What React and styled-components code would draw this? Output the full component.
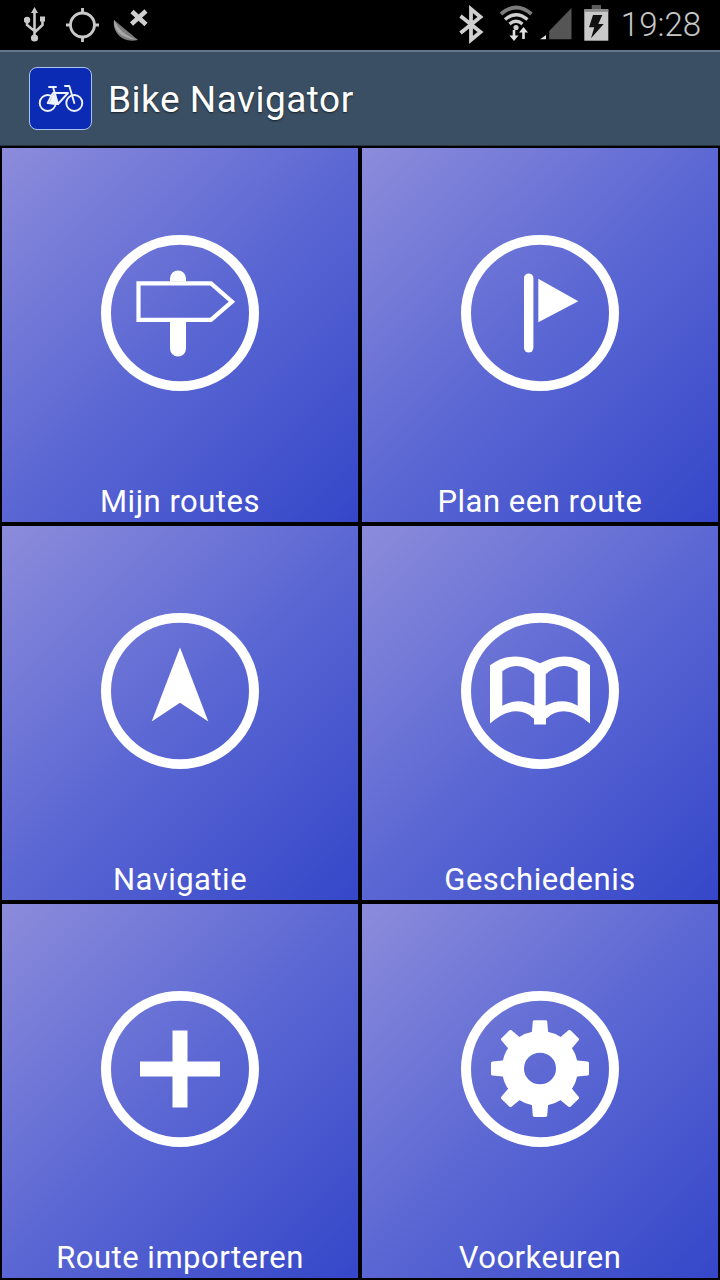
import React from 'react'
import styled, { createGlobalStyle } from 'styled-components'

const GlobalStyle = createGlobalStyle`
    html, body {
        margin: 0;
        padding: 0;
        background: #000;
        font-family: Roboto, "Liberation Sans", sans-serif;
    }
`
const Page = styled.div`
    width: 720px;
    height: 1280px;
    overflow: hidden;
    display: flex;
    flex-direction: column;
    background: #000;
`
const StatusBar = styled.div`
    height: 50px;
    flex: none;
    display: flex;
    align-items: center;
    justify-content: space-between;
    padding: 0 19px 0 24px;
`
const IconGroup = styled.div`
    display: flex;
    align-items: center;
`
const StatusIcon = styled.svg`
    height: 50px;
    flex: none;
    display: block;
`
const Clock = styled.span`
    font-size: 33px;
    font-weight: 300;
    line-height: 50px;
    color: #c8c8c8;
`
const ActionBar = styled.header`
    height: 96px;
    flex: none;
    box-sizing: border-box;
    display: flex;
    align-items: center;
    gap: 16px;
    padding: 0 0 0 29px;
    background: #3a4f64;
    border-top: 2px solid #62788c;
    border-bottom: 1px solid #26333f;
`
const Badge = styled.div`
    width: 63px;
    height: 63px;
    flex: none;
    box-sizing: border-box;
    display: flex;
    align-items: center;
    justify-content: center;
    background: #0c2bb4;
    border: 1.5px solid #a9c3f0;
    border-radius: 8px;
`
const AppTitle = styled.h1`
    margin: 2px 0 0;
    font-size: 37px;
    font-weight: 400;
    letter-spacing: 0.5px;
    line-height: 44px;
    color: #fff;
    text-shadow: 0 1px 2px rgba(0, 0, 0, 0.6);
`
const Grid = styled.main`
    flex: 1;
    display: grid;
    grid-template-columns: repeat(2, 356px);
    grid-template-rows: repeat(3, 374px);
    gap: 4px;
    padding: 2px;
`
const Tile = styled.div`
    display: flex;
    flex-direction: column;
    align-items: center;
    padding-top: 87px;
    background: linear-gradient(135deg, #8c8cdb 0%, #5b67d3 50%, #3547c9 100%);
`
const TileIcon = styled.svg`
    width: 158px;
    height: 156px;
    flex: none;
    display: block;
`
const TileLabel = styled.span`
    margin-top: auto;
    padding-bottom: 1px;
    font-size: 31px;
    letter-spacing: 0.5px;
    line-height: 38px;
    color: #fff;
`

const Ring = ({ children }) => (
    <TileIcon viewBox="0 0 158 158" preserveAspectRatio="none" fill="#fff">
        <circle cx="79" cy="79" r="74" fill="none" stroke="#fff" strokeWidth="10" />
        {children}
    </TileIcon>
)

const gearTeeth = [0, 45, 90, 135, 180, 225, 270, 315]

const icons = {
    sign: (
        <>
            <path d="M69 47V44a8 8 0 0 1 16 0V47ZM69 88H85V115a8 8 0 0 1-16 0Z" />
            <path d="M37.500 49H110L131 67.500L110 86H37.500Z" fill="none" stroke="#fff" strokeWidth="4.200" />
        </>
    ),
    flag: (
        <>
            <rect x="63" y="39" width="9.400" height="80" rx="4.700" />
            <path d="M77.300 44.300L117.300 67L77.300 88.300Z" />
        </>
    ),
    arrow: <path d="M79 35L107.300 110L79 91L50.700 110Z" />,
    book: (
        <path
            fillRule="evenodd"
            d="M29 53Q52 36 79 51Q106 36 129 53V112Q104 90 85 107V113H73V107Q54 90 29 112ZM41.300 59Q57 47 73.300 62V94Q57 85 41.300 94ZM116.700 59Q101 47 84.700 62V94Q101 85 116.700 94Z"
        />
    ),
    plus: <path d="M71.500 40H86.500V71.500H119V86.500H86.500V118H71.500V86.500H39V71.500H71.500Z" />,
    gear: (
        <>
            <circle cx="79" cy="78.500" r="27" fill="none" stroke="#fff" strokeWidth="22" />
            {gearTeeth.map(angle => (
                <path key={angle} d="M70.500 46L71.800 31Q72 29.500 73.500 29.500H84.500Q86 29.500 86.200 31L87.500 46Z" transform={`rotate(${angle} 79 78.500)`} />
            ))}
        </>
    ),
}

const tiles = [
    { label: 'Mijn routes', icon: 'sign' },
    { label: 'Plan een route', icon: 'flag' },
    { label: 'Navigatie', icon: 'arrow' },
    { label: 'Geschiedenis', icon: 'book' },
    { label: 'Route importeren', icon: 'plus' },
    { label: 'Voorkeuren', icon: 'gear' },
]

const BikeLogo = () => (
    <svg width="46" height="30" viewBox="0 0 46 30" fill="none" stroke="#eef2fd" strokeWidth="1.900" strokeLinecap="round" strokeLinejoin="round">
        <circle cx="9.700" cy="19" r="8" />
        <circle cx="36.300" cy="19" r="8" />
        <path d="M11 3H18M15 3L20 20L9.700 19L15 9H30L20 20M27 2H31.300L36.300 19" />
        <path d="M12 19L16 11L20 20Z" fill="#eef2fd" />
    </svg>
)

// status icons are drawn in screen coordinates, each viewBox runs up to the next icon
const UsbIcon = () => (
    <StatusIcon width="42" viewBox="24 0 42 50" fill="#c9c9c9" stroke="#c9c9c9">
        <path d="M34.500 37V11M27 20V25L34.500 31M42.500 20V25L35 32" fill="none" strokeWidth="2.600" />
        <path d="M34.500 7L38 13H31Z" stroke="none" />
        <circle cx="34.500" cy="38" r="3.600" stroke="none" />
        <circle cx="27" cy="20" r="3.200" stroke="none" />
        <rect x="40" y="16.500" width="5" height="5" stroke="none" />
    </StatusIcon>
)

const GpsIcon = () => (
    <StatusIcon width="47" viewBox="66 0 47 50" fill="none" stroke="#c9c9c9" strokeWidth="2.800">
        <circle cx="82.500" cy="25" r="12" />
        <path d="M66 25H71M94 25H99M82.500 8V13M82.500 37V42" />
    </StatusIcon>
)

const SatelliteOffIcon = () => (
    <StatusIcon width="35" viewBox="113 0 35 50">
        <path d="M114 20C112 32 122 44 138 40Z" fill="#7c7c7c" />
        <path d="M114 20C113.500 29 119 38 138 40C127 37 119 30 114 20Z" fill="#a8a8a8" />
        <path d="M132 11.500L146 24.500M146 11L131.500 24" stroke="#cfcfcf" strokeWidth="4.600" fill="none" />
    </StatusIcon>
)

const BluetoothIcon = () => (
    <StatusIcon width="40" viewBox="460 0 40 50" fill="none" stroke="#cfcfcf" strokeWidth="3.800">
        <path d="M461.500 16L481.500 32L472 40V9L481.500 17L461.500 33" />
    </StatusIcon>
)

const WifiIcon = () => (
    <StatusIcon width="41.500" viewBox="500 0 41.500 50" fill="none">
        <path d="M502 14Q517 1 532.500 14" stroke="#7c7c7c" strokeWidth="3.800" />
        <path d="M506 19.500Q517 10 528.500 19.500" stroke="#cfcfcf" strokeWidth="3.400" />
        <path d="M510.500 24Q517 18.500 523.500 24" stroke="#cfcfcf" strokeWidth="3.200" />
        <circle cx="517" cy="27.500" r="2.600" fill="#cfcfcf" />
        <path d="M515 30V37M524.500 30V39" stroke="#e2e2e2" strokeWidth="2.600" />
        <path d="M510.500 35.500H519.500L515 41ZM520 32.500H529L524.500 27Z" fill="#e2e2e2" />
    </StatusIcon>
)

const SignalIcon = () => (
    <StatusIcon width="43.500" viewBox="541.500 0 43.500 50">
        <path d="M541.700 39.300L547.500 35V39.300Z" fill="#e2e2e2" />
        <path d="M550.700 31L573 8V39.300H550.700Z" fill="#555" />
    </StatusIcon>
)

const BatteryIcon = () => (
    <StatusIcon width="37" viewBox="585 0 37 50">
        <rect x="592.700" y="5" width="9.300" height="4.300" fill="#5c5c5c" />
        <rect x="585.300" y="9.300" width="24" height="31.400" fill="#c9c9c9" />
        <rect x="585.300" y="9.300" width="24" height="2.500" fill="#8a8a8a" />
        <path d="M594 15H603.300L599.300 24H604.700L592 38.300L595.300 27.300H590Z" fill="#111" />
    </StatusIcon>
)

const App = () => {
    return (
        <Page>
            <GlobalStyle />
            <StatusBar>
                <IconGroup>
                    <UsbIcon />
                    <GpsIcon />
                    <SatelliteOffIcon />
                </IconGroup>
                <IconGroup>
                    <BluetoothIcon />
                    <WifiIcon />
                    <SignalIcon />
                    <BatteryIcon />
                    <Clock>19:28</Clock>
                </IconGroup>
            </StatusBar>
            <ActionBar>
                <Badge><BikeLogo /></Badge>
                <AppTitle>Bike Navigator</AppTitle>
            </ActionBar>
            <Grid>
                {tiles.map(tile => (
                    <Tile key={tile.label}>
                        <Ring>{icons[tile.icon]}</Ring>
                        <TileLabel>{tile.label}</TileLabel>
                    </Tile>
                ))}
            </Grid>
        </Page>
    )
}

export default App
